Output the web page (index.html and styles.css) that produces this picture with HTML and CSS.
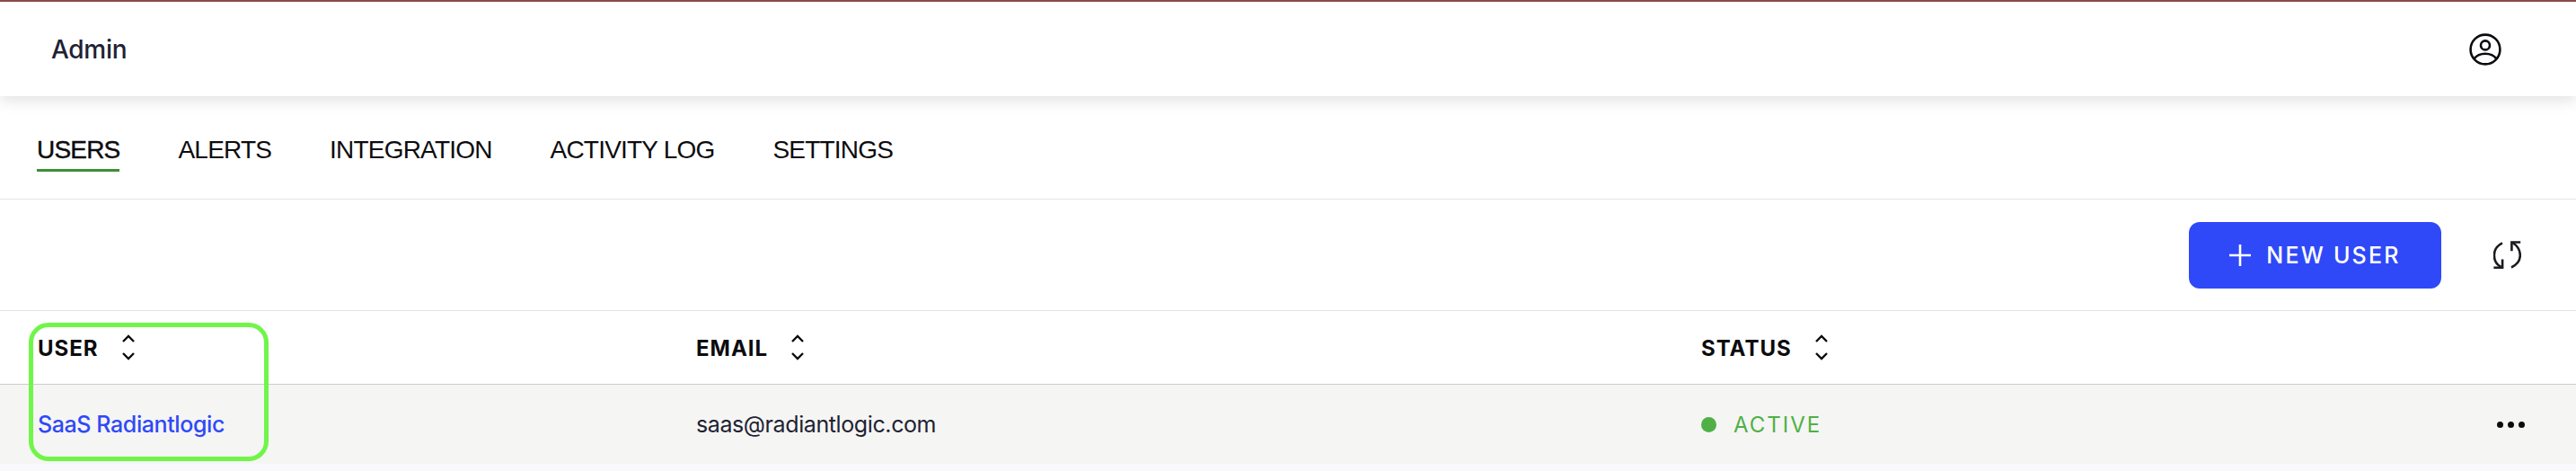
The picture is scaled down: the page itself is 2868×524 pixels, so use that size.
FILE: index.html
```html
<!DOCTYPE html>
<html lang="en">
<head>
  <meta charset="UTF-8" />
  <title>Admin</title>
  <link rel="stylesheet" href="styles.css">
</head>
<body>

  <header class="topbar">
    <span class="brand">Admin</span>
    <svg class="user-icon" viewBox="0 0 36 36" fill="none" stroke="#0c0c0f" stroke-width="2.6">
      <circle cx="18" cy="18" r="16.4" />
      <circle cx="18" cy="13.4" r="5" />
      <path d="M5.6 28.4C8.5 24.6 13 22.8 18 22.8s9.5 1.8 12.4 5.6" />
    </svg>
  </header>

  <nav class="tabs">
    <a class="tab active">USERS</a>
    <a class="tab">ALERTS</a>
    <a class="tab">INTEGRATION</a>
    <a class="tab">ACTIVITY LOG</a>
    <a class="tab">SETTINGS</a>
  </nav>

  <section class="toolbar">
    <button class="new-user">
      <svg class="plus" viewBox="0 0 24 24" fill="none" stroke="#fff" stroke-width="2.6">
        <path d="M12 0v24M0 12h24" />
      </svg>
      NEW USER
    </button>
    <svg class="refresh" viewBox="0 0 31 31" fill="none" stroke="#1b1b20" stroke-width="2.6">
      <path d="M10 2.3C3.5 5.5 .9 10.5 .9 16c0 5.800 2.500 10.300 7.600 13" />
      <path d="M.4 29.700h9.700V20.500" />
      <path d="M20 29.500c6.500-3 9.800-8 9.800-13.500 0-5.800-3-10.500-8.300-14" />
      <path d="M30.200 1.500h-9.800v9.700" />
    </svg>
  </section>

  <div class="table">
    <div class="row head">
      <div class="cell">USER
        <svg class="sort" viewBox="0 0 14 28" fill="none" stroke="#0c0c0f" stroke-width="2.400"><path d="M1 8l6-6 6 6M1 21l6 6 6-6" /></svg>
      </div>
      <div class="cell">EMAIL
        <svg class="sort" viewBox="0 0 14 28" fill="none" stroke="#0c0c0f" stroke-width="2.400"><path d="M1 8l6-6 6 6M1 21l6 6 6-6" /></svg>
      </div>
      <div class="cell">STATUS
        <svg class="sort" viewBox="0 0 14 28" fill="none" stroke="#0c0c0f" stroke-width="2.400"><path d="M1 8l6-6 6 6M1 21l6 6 6-6" /></svg>
      </div>
    </div>
    <div class="row body">
      <div class="cell"><a class="user-link">SaaS Radiantlogic</a></div>
      <div class="cell email">saas@radiantlogic.com</div>
      <div class="cell status"><span class="dot"></span>ACTIVE</div>
      <div class="cell more"><span></span><span></span><span></span></div>
    </div>
    <div class="highlight"></div>
  </div>

</body>
</html>
```

FILE: styles.css
```css
html,
body {
  height: 100%;
}

body {
  margin: 0;
  font-family: Inter, "Liberation Sans", Arial, sans-serif;
  background: #f9f9fb;
  color: #0c0c0f;
  display: flex;
  flex-direction: column;
  overflow: hidden;
}

.topbar {
  display: flex;
  justify-content: space-between;
  align-items: center;
  height: 105px;
  padding: 0 83px 0 57px;
  background: #fff;
  border-top: 2px solid #8a4a4a;
  box-shadow: 0 4px 16px rgba(0, 0, 0, 0.13);
  position: relative;
}

.brand {
  font-size: 28px;
  font-weight: 500;
  letter-spacing: -0.3px;
  color: #1f2233;
}

.user-icon {
  width: 36px;
  height: 36px;
}

.tabs {
  display: flex;
  gap: 65px;
  height: 115px;
  padding-left: 41px;
  background: #fff;
  border-bottom: 1px solid #e4e4e4;
  box-sizing: border-box;
  font-family: "Liberation Sans", Arial, sans-serif;
}

.tab {
  margin-top: 41px;
  height: 40px;
  font-size: 28px;
  line-height: 38px;
  letter-spacing: -0.8px;
}

.tab.active {
  border-bottom: 3px solid #3d8f35;
  -webkit-text-stroke: 0.4px #0c0c0f;
}

.toolbar {
  display: flex;
  justify-content: flex-end;
  align-items: center;
  gap: 58px;
  height: 123px;
  padding: 0 61px 0 0;
  background: #fff;
}

.new-user {
  display: flex;
  align-items: center;
  justify-content: center;
  gap: 17px;
  width: 281px;
  height: 74px;
  margin-top: 1px;
  border: none;
  border-radius: 12px;
  background: #2f49f8;
  color: #fff;
  font-family: inherit;
  font-size: 25px;
  font-weight: 500;
  letter-spacing: 2.2px;
}

.plus {
  width: 24px;
  height: 24px;
}

.refresh {
  width: 31px;
  height: 31px;
  margin-bottom: 1px;
}

.table {
  position: relative;
  border-top: 1px solid #e4e4e4;
}

.row {
  display: grid;
  grid-template-columns: 733px 1119px 1fr 88px;
  align-items: center;
  padding-left: 42px;
}

.row.head {
  height: 79px;
  padding-top: 2px;
  background: #fff;
  border-bottom: 1px solid #ccc;
  font-size: 24px;
  font-weight: 700;
  letter-spacing: 1px;
}

.row.body {
  height: 88px;
  background: #f5f5f3;
  font-size: 25px;
  letter-spacing: -0.4px;
}

.head .cell {
  display: flex;
  align-items: center;
  gap: 26px;
}

.sort {
  width: 14px;
  height: 30px;
  margin-top: -3px;
}

.user-link {
  color: #2f49f8;
  font-weight: 500;
}

.email {
  color: #1f2233;
}

.status {
  display: flex;
  align-items: center;
  gap: 19px;
  color: #4fb045;
  font-size: 24px;
  letter-spacing: 2px;
}

.dot {
  width: 17px;
  height: 17px;
  border-radius: 50%;
  background: #4fb045;
}

.more {
  display: flex;
  gap: 5px;
}

.more span {
  width: 7px;
  height: 7px;
  border-radius: 50%;
  background: #0c0c0f;
}

/* annotation box over the first column */
.highlight {
  position: absolute;
  left: 32px;
  top: 13px;
  width: 267px;
  height: 154px;
  box-sizing: border-box;
  border: 5px solid #70f54a;
  border-radius: 22px;
}
```
